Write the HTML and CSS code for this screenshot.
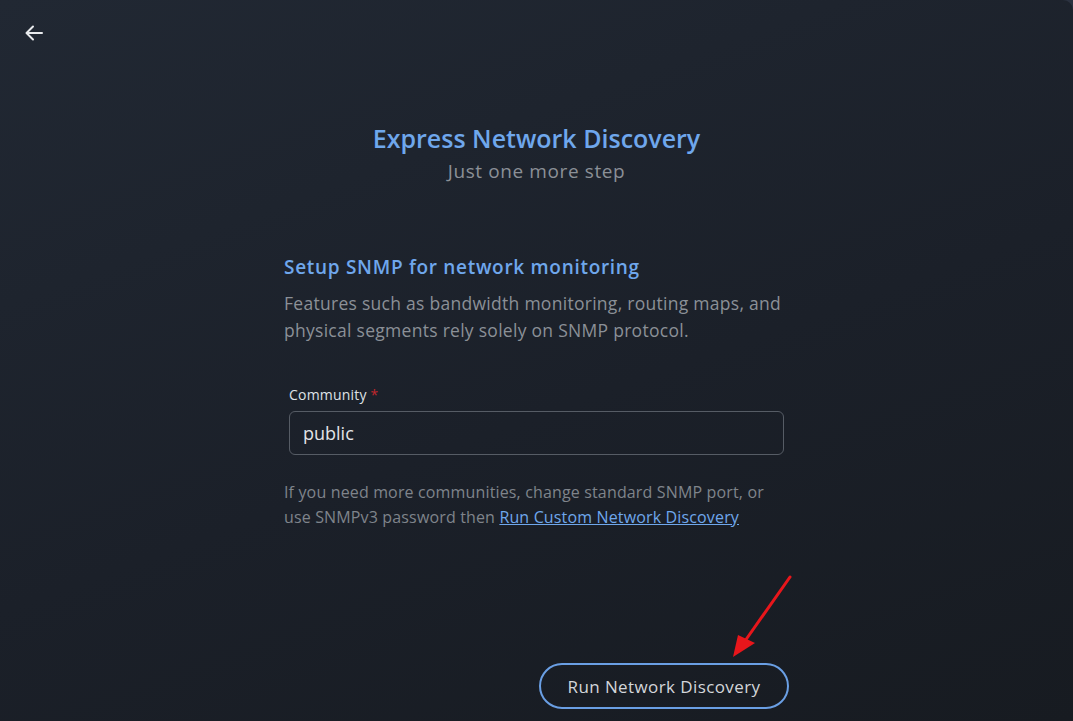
FILE: index.html
```html
<!DOCTYPE html>
<html lang="en">
<head>
    <meta charset="UTF-8">
    <title>Express Network Discovery</title>
    <link rel="stylesheet" href="styles.css">
</head>
<body>
    <div class="window">
        <div class="topbar">
            <a href="#" class="back">
                <svg width="22" height="22" viewBox="0 0 22 22" fill="none" stroke="#e8eaed" stroke-width="2" stroke-linecap="round" stroke-linejoin="round">
                    <path d="M19 11H4"/>
                    <path d="M10 4.5L3.5 11L10 17.5"/>
                </svg>
            </a>
        </div>
        <div class="head">
            <h1 class="title">Express Network Discovery</h1>
            <p class="subtitle">Just one more step</p>
        </div>
        <div class="content">
            <h2 class="section-title">Setup SNMP for network monitoring</h2>
            <p class="section-text">Features such as bandwidth monitoring, routing maps, and physical segments rely solely on SNMP protocol.</p>
            <div class="field">
                <label class="field-label">Community <span class="req">*</span></label>
                <div class="input">public</div>
            </div>
            <p class="help">If you need more communities, change standard SNMP port, or use SNMPv3 password then <a href="#" class="link">Run Custom Network Discovery</a></p>
            <div class="actions">
                <button class="run-btn">Run Network Discovery</button>
                <svg class="pointer" width="60" height="88" viewBox="0 0 60 88" fill="none">
                    <path d="M58 6L13 70" stroke="#e8161b" stroke-width="3" stroke-linecap="round"/>
                    <path d="M1 86L6 64L23 72Z" fill="#e8161b"/>
                </svg>
            </div>
        </div>
    </div>
</body>
</html>
```

FILE: styles.css
```css
*{
    margin: 0;
    padding: 0;
    box-sizing: border-box;
}
html, body{
    height: 100%;
}
body{
    background: #2b3240;
    font-family: "Open Sans", "Noto Sans", sans-serif;
    overflow: hidden;
}
.window{
    height: 100%;
    border-top-right-radius: 10px;
    background: linear-gradient(160deg, #212833 0%, #1b2029 55%, #171b21 100%);
    display: flex;
    flex-direction: column;
}
.topbar{
    height: 64px;
    padding: 22px 0 0 23px;
}
.back{
    display: inline-block;
    width: 22px;
    height: 22px;
}
.head{
    margin-top: 57px;
    text-align: center;
}
.title{
    font-size: 25px;
    font-weight: 600;
    color: #6fa7ec;
    line-height: 34px;
}
.subtitle{
    font-size: 19px;
    letter-spacing: 0.6px;
    color: #8b9097;
    line-height: 32px;
}
.content{
    width: 505px;
    margin: 67px auto 0;
    position: relative;
}
.section-title{
    font-size: 19px;
    font-weight: 600;
    letter-spacing: 0.7px;
    color: #6fa7ec;
    line-height: 26px;
}
.section-text{
    margin-top: 10px;
    font-size: 17.5px;
    letter-spacing: 0.28px;
    color: #8b9097;
    line-height: 27px;
}
.field{
    margin-top: 42px;
    padding: 0 5px;
}
.field-label{
    display: block;
    font-size: 14px;
    font-weight: 500;
    letter-spacing: 0.2px;
    color: #dfe2e6;
    line-height: 18px;
}
.req{
    color: #c0272d;
}
.input{
    margin-top: 7px;
    height: 44px;
    border: 1px solid #565c65;
    border-radius: 6px;
    padding: 0 13px;
    display: flex;
    align-items: center;
    font-size: 18px;
    color: #e2e4e8;
}
.help{
    margin-top: 25px;
    font-size: 16px;
    letter-spacing: 0.15px;
    color: #7f848b;
    line-height: 25px;
}
.link{
    color: #6fa7ec;
}
.actions{
    margin-top: 133px;
    display: flex;
    justify-content: flex-end;
}
.run-btn{
    width: 250px;
    height: 46px;
    border: 2px solid #6a9fe4;
    border-radius: 23px;
    background: transparent;
    font-family: inherit;
    font-size: 17px;
    letter-spacing: 0.4px;
    color: #d3d6da;
}
.pointer{
    position: absolute;
    right: -3px;
    bottom: 50px;
}
```
